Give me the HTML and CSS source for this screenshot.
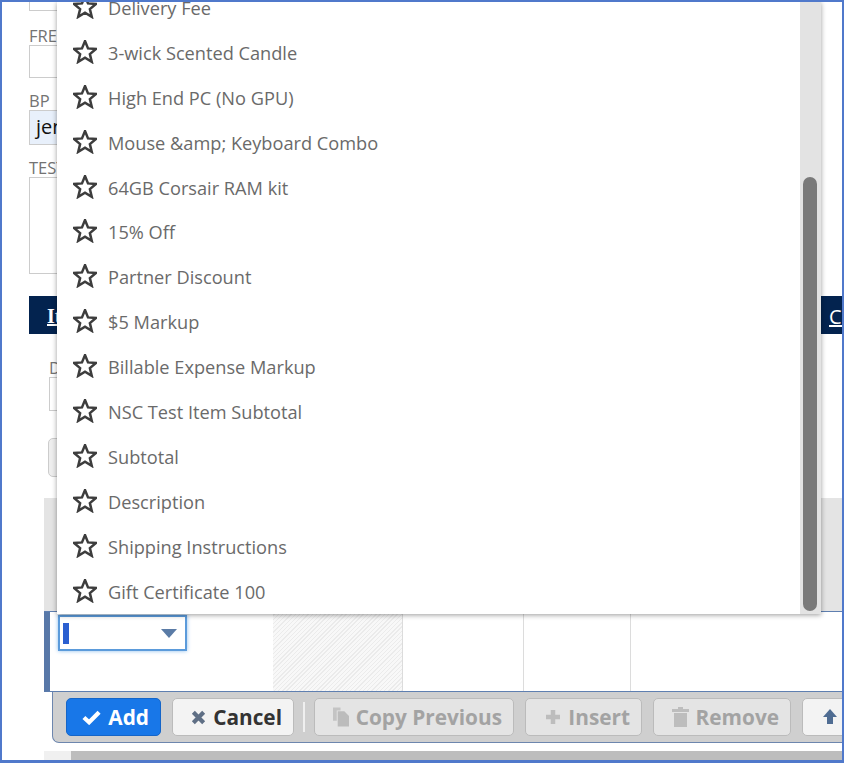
FILE: index.html
```html
<!DOCTYPE html>
<html lang="en">
<head>
    <meta charset="utf-8">
    <title>Transaction Items</title>
    <link rel="stylesheet" href="styles.css">
</head>
<body>
<svg class="defs" aria-hidden="true">
    <symbol id="star" viewBox="1 1.500 22 22">
        <polygon points="12,2.5 14.76,9.2 22,9.75 16.47,14.45 18.2,21.5 12,17.7 5.8,21.5 7.53,14.45 2,9.75 9.24,9.2" fill="none" stroke="#3d3d3d" stroke-width="2.300"/>
    </symbol>
</svg>
<div class="frame">
    <div class="form">
        <div class="stub"></div>
        <div class="field">
            <label>FREE</label>
            <div class="input"></div>
        </div>
        <div class="field">
            <label>BP</label>
            <div class="input filled">jen</div>
        </div>
        <div class="field">
            <label>TEST</label>
            <div class="input tall"></div>
        </div>
    </div>

    <div class="tabs">
        <a class="tab first">Items</a>
        <a class="tab">Communication</a>
    </div>

    <div class="sub">
        <label class="sub-label">Discount</label>
        <div class="input"></div>
        <div class="sub-btn"></div>
    </div>

    <div class="machine">
        <div class="machine-head"></div>
        <div class="machine-row">
            <div class="cell cell-item">
                <div class="picker">
                    <span class="caret"></span>
                    <span class="arrow"></span>
                </div>
            </div>
            <div class="cell cell-hatch"></div>
            <div class="cell cell-a"></div>
            <div class="cell cell-b"></div>
            <div class="cell cell-rest"></div>
        </div>
        <div class="toolbar">
            <button class="btn primary">
                <svg width="19" height="16" viewBox="0 0 20 16"><path d="M2 8.500l5.500 5L18 3" fill="none" stroke="#fff" stroke-width="4.500"/></svg>Add
            </button>
            <button class="btn cancel">
                <svg width="15" height="15" viewBox="0 0 16 16"><path d="M2.500 2.500l11 11M13.500 2.500l-11 11" fill="none" stroke="#5f6f85" stroke-width="4.500"/></svg>Cancel
            </button>
            <span class="sep"></span>
            <button class="btn off copy">
                <svg width="16" height="20" viewBox="0 0 17 20"><path d="M0 0h8v3H4v11H0z" fill="#c4c4c4"/><path d="M5 4h7l5 5v11H5z" fill="#bcbcbc"/></svg>Copy Previous
            </button>
            <button class="btn off insert">
                <svg width="16" height="16" viewBox="0 0 16 16"><path d="M8 1v14M1 8h14" fill="none" stroke="#bdbdbd" stroke-width="4.500"/></svg>Insert
            </button>
            <button class="btn off remove">
                <svg width="17" height="20" viewBox="0 0 17 20"><path d="M0 2h6V0h5v2h6v3H0zM2 6h13v14H2z" fill="#bdbdbd"/></svg>Remove
            </button>
            <button class="btn up">
                <svg width="14" height="16" viewBox="0 0 14 16"><path d="M7 0l7 8H10v7H4V8H0z" fill="#4f6c92"/></svg>
            </button>
        </div>
        <div class="hscroll">
            <span class="hscroll-arrow"></span>
            <span class="hscroll-thumb"></span>
        </div>
    </div>

    <div class="dropdown">
        <ul class="options">
            <li><svg class="star"><use href="#star"/></svg>Delivery Fee</li>
            <li><svg class="star"><use href="#star"/></svg>3-wick Scented Candle</li>
            <li><svg class="star"><use href="#star"/></svg>High End PC (No GPU)</li>
            <li><svg class="star"><use href="#star"/></svg>Mouse &amp;amp; Keyboard Combo</li>
            <li><svg class="star"><use href="#star"/></svg>64GB Corsair RAM kit</li>
            <li><svg class="star"><use href="#star"/></svg>15% Off</li>
            <li><svg class="star"><use href="#star"/></svg>Partner Discount</li>
            <li><svg class="star"><use href="#star"/></svg>$5 Markup</li>
            <li><svg class="star"><use href="#star"/></svg>Billable Expense Markup</li>
            <li><svg class="star"><use href="#star"/></svg>NSC Test Item Subtotal</li>
            <li><svg class="star"><use href="#star"/></svg>Subtotal</li>
            <li><svg class="star"><use href="#star"/></svg>Description</li>
            <li><svg class="star"><use href="#star"/></svg>Shipping Instructions</li>
            <li><svg class="star"><use href="#star"/></svg>Gift Certificate 100</li>
        </ul>
        <div class="track"><div class="thumb"></div></div>
    </div>
</div>
</body>
</html>
```

FILE: styles.css
```css
* {
    box-sizing: border-box;
}
html, body {
    margin: 0;
    padding: 0;
}
body {
    font-family: "Open Sans", sans-serif;
    background: #fff;
}
.defs {
    position: absolute;
    width: 0;
    height: 0;
}
.frame {
    position: relative;
    width: 844px;
    height: 763px;
    border: solid #5079cb;
    border-width: 2px 2px 3px 2px;
    background: #fff;
    overflow: hidden;
}

/* form behind the dropdown */
.form {
    padding-left: 27px;
}
.stub {
    width: 40px;
    height: 9px;
    border: 1px solid #ccc;
    border-top: none;
}
.field {
    margin-top: 13px;
}
.field:nth-child(2) {
    margin-top: 15px;
}
.field label, .sub-label {
    display: block;
    height: 19px;
    font-size: 16.500px;
    line-height: 19px;
    color: #737373;
}
.input {
    width: 60px;
    height: 33px;
    border: 1px solid #ccc;
    background: #fff;
}
.input.filled {
    height: 35px;
    background: #e8f0fb;
    color: #111;
    font-size: 20px;
    line-height: 32px;
    padding-left: 6px;
}
.input.tall {
    height: 97px;
}
.tabs {
    display: flex;
    align-items: center;
    height: 38px;
    margin: 22px 0 0 27px;
    padding: 3px 0 0 18px;
    background: #03234f;
    white-space: nowrap;
    overflow: hidden;
}
.tab {
    flex-shrink: 0;
    color: #fff;
    font-size: 20px;
    text-decoration: underline;
}
.tab.first {
    flex-basis: 782px;
    font-family: "Liberation Serif", serif;
    font-weight: bold;
}
.sub {
    padding: 24px 0 0 47px;
}
.sub .input {
    height: 34px;
}
.sub-btn {
    width: 60px;
    height: 39px;
    margin: 27px 0 0 -1px;
    background: #eee;
    border: 1px solid #ccc;
    border-radius: 5px;
}

/* line item machine */
.machine {
    margin: 21px 0 0 42px;
}
.machine-head {
    height: 114px;
    background: #e4e4e4;
    border-bottom: 1px solid #5f7fb0;
}
.machine-row {
    display: flex;
    height: 80px;
    border-left: 6px solid #5878a8;
    border-bottom: 1px solid #5f7fb0;
}
.cell {
    border-right: 1px solid #dcdcdc;
}
.cell-item {
    width: 223px;
    padding: 3px 0 0 8px;
    border-right: none;
}
.cell-hatch {
    width: 130px;
    background: repeating-linear-gradient(135deg, #f8f8f8 0 2px, #ebebeb 2px 3px);
}
.cell-a {
    width: 121px;
}
.cell-b {
    width: 107px;
}
.cell-rest {
    flex: 1;
    border-right: none;
}
.picker {
    display: flex;
    align-items: center;
    justify-content: space-between;
    width: 129px;
    height: 36px;
    padding: 0 8px 0 3px;
    border: 2px solid #5b9bdb;
    box-shadow: 0 0 4px #8cbcec;
    background: #fff;
}
.caret {
    width: 6px;
    height: 21px;
    background: #2b5fd0;
}
.arrow {
    border-left: 8px solid transparent;
    border-right: 8px solid transparent;
    border-top: 9px solid #5a7ba6;
}
.toolbar {
    display: flex;
    align-items: center;
    gap: 11px;
    height: 51px;
    margin-left: 8px;
    padding: 0 0 0 13px;
    background: #cfcfcf;
    border: solid #6d86ae;
    border-width: 0 0 1px 1px;
    border-bottom-left-radius: 7px;
    overflow: hidden;
}
.btn {
    display: flex;
    flex-shrink: 0;
    align-items: center;
    justify-content: flex-end;
    gap: 7px;
    height: 38px;
    padding: 0 11px 0 0;
    font-family: inherit;
    font-size: 20.800px;
    font-weight: bold;
    border: 1px solid #bbb;
    border-radius: 5px;
    background: #f3f3f3;
    color: #333;
}
.btn.primary {
    width: 95px;
    background: #1877e8;
    border-color: #1565c8;
    color: #fff;
}
.btn.cancel {
    width: 122px;
}
.btn.off {
    background: #e4e4e4;
    color: #a3a3a3;
}
.btn.copy {
    width: 200px;
}
.btn.insert {
    width: 117px;
}
.btn.remove {
    width: 138px;
}
.btn.up {
    width: 60px;
    justify-content: flex-start;
    padding: 0 0 0 20px;
}
.sep {
    flex-shrink: 0;
    width: 2px;
    height: 30px;
    margin: 0 -2px;
    background: #efefef;
}
.hscroll {
    display: flex;
    align-items: stretch;
    height: 10px;
    margin-top: 8px;
    background: #f0f0f0;
}
.hscroll-arrow {
    width: 27px;
}
.hscroll-thumb {
    flex: 1;
    background: #bdbdbd;
}

/* open dropdown */
.dropdown {
    position: absolute;
    top: 0;
    left: 55px;
    width: 764px;
    height: 612px;
    background: #fff;
    box-shadow: 0 1px 5px rgba(0, 0, 0, 0.4);
    overflow: hidden;
}
.options {
    display: flex;
    flex-direction: column;
    justify-content: flex-end;
    height: 100%;
    margin: 0;
    padding: 0;
    list-style: none;
}
.options li {
    display: flex;
    flex-shrink: 0;
    align-items: center;
    gap: 11px;
    height: 44.900px;
    padding-left: 16px;
    font-size: 18.200px;
    color: #6a6a6a;
}
.star {
    width: 24px;
    height: 24px;
    margin-bottom: 2px;
}
.track {
    position: absolute;
    top: 0;
    right: 0;
    width: 21px;
    height: 100%;
    background: #e3e3e3;
}
.thumb {
    width: 14px;
    height: 434px;
    margin: 175px 0 0 3px;
    border-radius: 7px;
    background: #7a7a7a;
}
```
